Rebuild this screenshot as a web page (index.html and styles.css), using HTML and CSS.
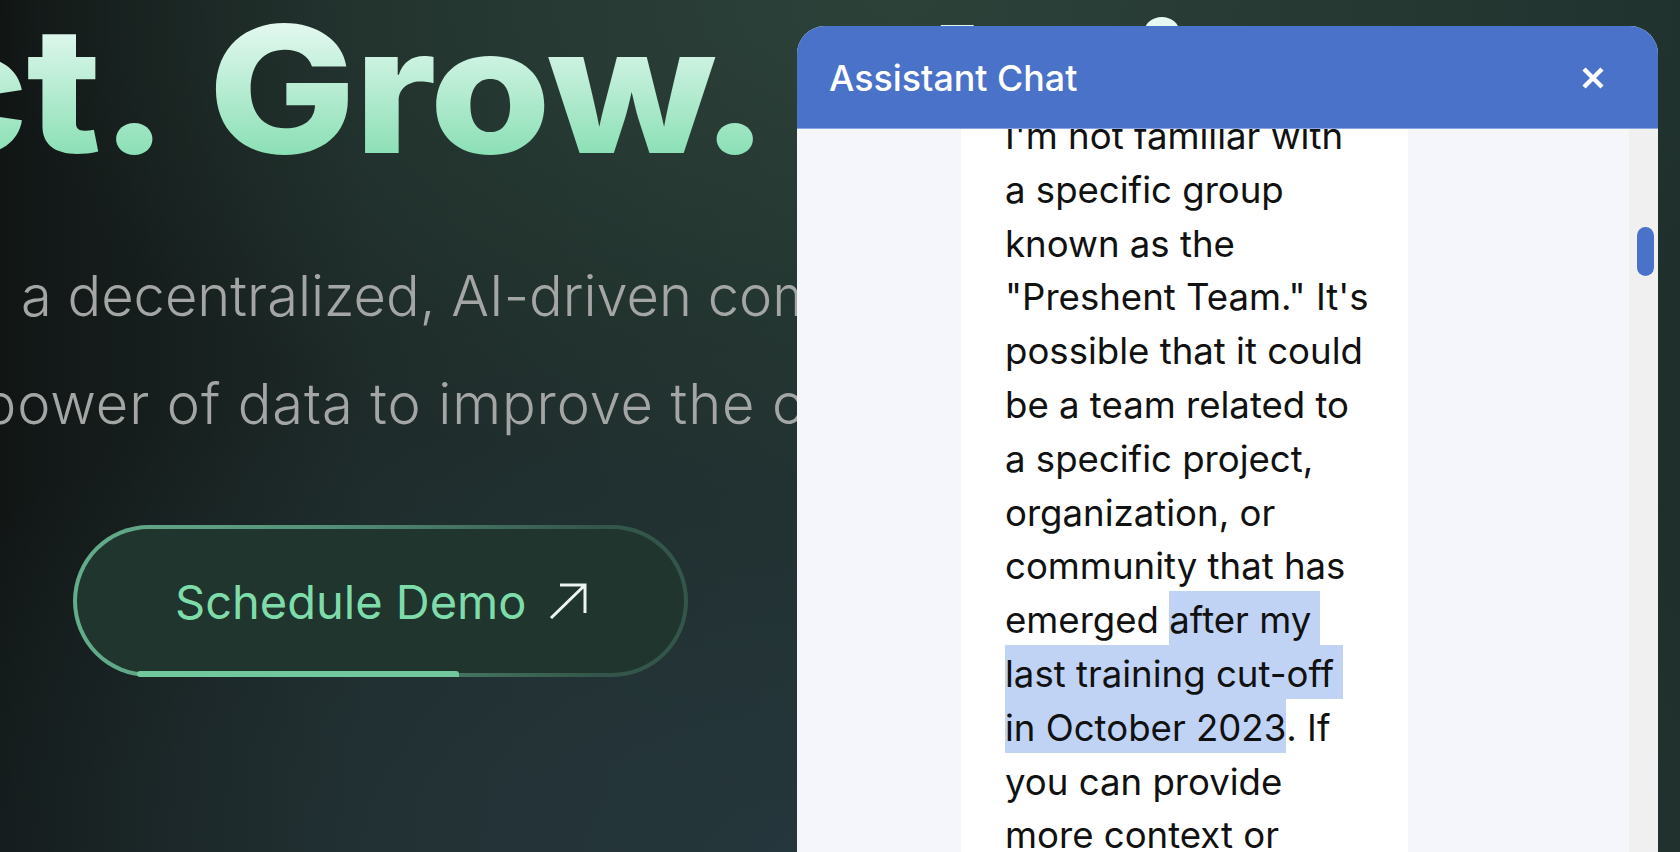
FILE: index.html
```html
<!DOCTYPE html>
<html lang="en">
<head>
<meta charset="utf-8">
<title>Assistant Chat</title>
<link rel="stylesheet" href="styles.css">
</head>
<body>
<main class="page">
  <section class="hero">
    <h1 class="headline">Connect. Grow. <span class="cap-t">T</span>hrive.</h1>
    <p class="lede lede-one">Welcome to Preshent, a decentralized, AI-driven community</p>
    <p class="lede lede-two">harnessing the power of data to improve the crypto world</p>
    <a class="demo" href="#">
      <span>Schedule Demo</span>
      <svg class="demo-arrow" viewBox="0 0 38 36" aria-hidden="true"><path d="M2 35 36 2M11 2h25v28" fill="none" stroke="#eef5f1" stroke-width="3"/></svg>
    </a>
  </section>
  <aside class="chat">
    <header class="chat-head">
      <h2 class="chat-title">Assistant Chat</h2>
      <svg class="chat-close" viewBox="0 0 24 22" aria-hidden="true"><path d="M3 2 21 20M21 2 3 20" fill="none" stroke="#fff" stroke-width="4.4"/></svg>
    </header>
    <div class="chat-body">
      <div class="chat-log">
        <div class="bubble">I'm not familiar with<br>a specific group<br>known as the<br>"Preshent Team." It's<br>possible that it could<br>be a team related to<br>a specific project,<br>organization, or<br>community that has<br>emerged <span class="sel">after my</span><br><span class="sel">last training cut-off</span><br><span class="sel sel-end">in October 2023</span>. If<br>you can provide<br>more context or<br>details, I'd be happy</div>
      </div>
      <div class="track"><div class="thumb"></div></div>
    </div>
  </aside>
</main>
</body>
</html>
```
FILE: styles.css
```css
* { box-sizing: border-box; }
html, body { margin: 0; height: 100%; }
body { background: #141a19; overflow: hidden; }

.page {
  position: relative;
  width: 1680px;
  height: 852px;
  overflow: hidden;
  background:
    radial-gradient(900px 500px at 900px 0, #2c4239 0%, rgba(44,66,57,0) 100%),
    radial-gradient(1000px 560px at 800px 852px, #25363c 0%, rgba(37,54,60,0) 100%),
    linear-gradient(90deg, #111615 0%, #1d2a28 22%, #20302d 50%, #1f302c 100%);
}

.hero { display: flex; flex-direction: column; align-items: flex-start; }

.headline {
  margin: -6px 0 0 -715px;
  font: 800 176px/190px Inter, "Liberation Sans", sans-serif;
  letter-spacing: -2px;
  word-spacing: 8px;
  white-space: nowrap;
  transform: scaleX(1.12);
  transform-origin: left center;
  background: linear-gradient(180deg, #e6f9f2 13%, #8ce0b6 84%);
  -webkit-background-clip: text;
  background-clip: text;
  color: transparent;
}
.cap-t { font-size: 160px; line-height: 0; letter-spacing: 0; }

.lede {
  margin: 0;
  font: 300 56px/108px Inter, "Liberation Sans", sans-serif;
  color: #a3a6a4;
  white-space: nowrap;
}
.lede-one { margin: 58px 0 0 -565px; }
.lede-two { margin-left: -432px; letter-spacing: .9px; }

.demo {
  display: flex;
  align-items: center;
  gap: 23px;
  width: 615px;
  height: 152px;
  margin: 67px 0 0 73px;
  padding: 0 0 0 98px;
  position: relative;
  border: 4px solid transparent;
  border-radius: 76px;
  background:
    linear-gradient(#1f352d, #1f352d) padding-box,
    linear-gradient(90deg, #64ad8b 0%, #55927a 40%, #34564a 85%, #34564a 100%) border-box;
  color: #7edcaa;
  font: 400 47px/1 Inter, "Liberation Sans", sans-serif;
  text-decoration: none;
}
.demo::after {
  content: "";
  position: absolute;
  left: 60px;
  bottom: -4px;
  width: 322px;
  height: 6px;
  background: #71c89d;
  border-radius: 4px 4px 0 4px;
}
.demo-arrow { width: 38px; height: 36px; flex: none; }

.chat {
  position: absolute;
  left: 797px;
  top: 26px;
  width: 861px;
  bottom: 0;
  display: flex;
  flex-direction: column;
  border-radius: 28px 28px 0 0;
  overflow: hidden;
  background: #f4f6fc;
}
.chat-head {
  flex: none;
  height: 103px;
  display: flex;
  align-items: center;
  justify-content: space-between;
  padding: 1px 53px 0 32px;
  background: #4a72c9;
  border-bottom: 1px solid #8aa6e0;
}
.chat-title {
  margin: 0 0 -3px;
  font: 500 35.8px/1 Inter, "Liberation Sans", sans-serif;
  color: #fff;
}
.chat-close { width: 24px; height: 22px; }

.chat-body { flex: 1; min-height: 0; display: flex; }
.chat-log { flex: 1; padding-left: 164px; overflow: hidden; }
.bubble {
  isolation: isolate;
  width: 447px;
  margin-top: -19px;
  padding: 0 0 0 44px;
  background: #fff;
  font: 400 36.6px/53.8px Inter, "Liberation Sans", sans-serif;
  color: #111;
  white-space: nowrap;
}
.sel {
  display: inline-block;
  position: relative;
  padding-right: 9px;
}
.sel::before {
  content: "";
  position: absolute;
  inset: -3px 0 3px;
  background: #c0d3f5;
  z-index: -1;
}
.sel-end { padding-right: 0; }

.track { flex: none; width: 29px; padding: 98px 4px 0 8px; background: #f0f0f1; }
.thumb { height: 49px; border-radius: 9px; background: #4a72c9; }
```
